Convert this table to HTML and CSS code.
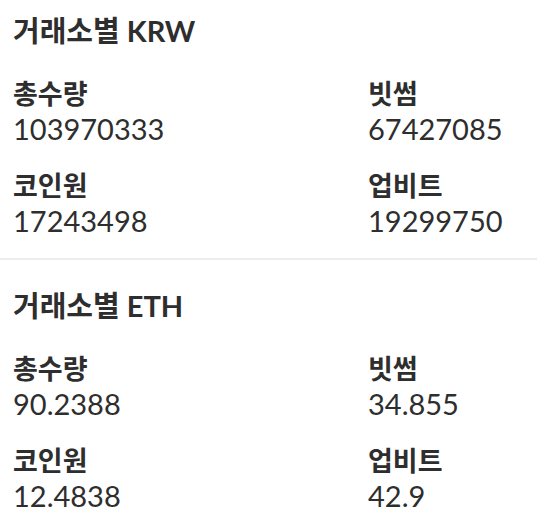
FILE: index.html
```html
<!DOCTYPE html>
<html lang="ko">
<head>
<meta charset="utf-8">
<link rel="stylesheet" href="styles.css">
</head>
<body>
<section class="market">
  <h2 class="market-title">거래소별 KRW</h2>
  <div class="stats">
    <div class="stat"><div class="stat-label">총수량</div><div class="stat-value">103970333</div></div>
    <div class="stat"><div class="stat-label">빗썸</div><div class="stat-value">67427085</div></div>
    <div class="stat"><div class="stat-label">코인원</div><div class="stat-value">17243498</div></div>
    <div class="stat"><div class="stat-label">업비트</div><div class="stat-value">19299750</div></div>
  </div>
</section>
<section class="market">
  <h2 class="market-title">거래소별 ETH</h2>
  <div class="stats">
    <div class="stat"><div class="stat-label">총수량</div><div class="stat-value">90.2388</div></div>
    <div class="stat"><div class="stat-label">빗썸</div><div class="stat-value">34.855</div></div>
    <div class="stat"><div class="stat-label">코인원</div><div class="stat-value">12.4838</div></div>
    <div class="stat"><div class="stat-label">업비트</div><div class="stat-value">42.9</div></div>
  </div>
</section>
</body>
</html>
```
FILE: styles.css
```css
html, body {
  margin: 0;
  padding: 0;
  background: #ffffff;
}
body {
  font-family: "Lato", "Noto Sans CJK KR", sans-serif;
  color: #2e2e2e;
}
.market {
  padding: 13px 13px 20px;
}
.market + .market {
  padding-top: 28px;
  border-top: 2px solid #ececec;
}
.market-title {
  margin: 0 0 27px;
  font-size: 29px;
  line-height: 36px;
  font-weight: 700;
}
.stats {
  display: grid;
  grid-template-columns: 355px 1fr;
  row-gap: 22px;
}
.stat-label {
  font-size: 27px;
  line-height: 35px;
  font-weight: 700;
}
.stat-value {
  font-size: 29px;
  line-height: 35px;
  font-weight: 400;
}
```
